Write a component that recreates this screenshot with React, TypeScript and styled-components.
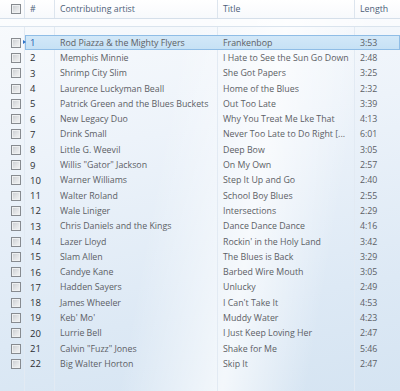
import styled, { createGlobalStyle } from "styled-components";

type Track = { artist: string; title: string; length: string };

const tracks: Track[] = [
  { artist: "Rod Piazza & the Mighty Flyers", title: "Frankenbop", length: "3:53" },
  { artist: "Memphis Minnie", title: "I Hate to See the Sun Go Down", length: "2:48" },
  { artist: "Shrimp City Slim", title: "She Got Papers", length: "3:25" },
  { artist: "Laurence Luckyman Beall", title: "Home of the Blues", length: "2:32" },
  { artist: "Patrick Green and the Blues Buckets", title: "Out Too Late", length: "3:39" },
  { artist: "New Legacy Duo", title: "Why You Treat Me Lke That", length: "4:13" },
  { artist: "Drink Small", title: "Never Too Late to Do Right [...", length: "6:01" },
  { artist: "Little G. Weevil", title: "Deep Bow", length: "3:05" },
  { artist: 'Willis "Gator" Jackson', title: "On My Own", length: "2:57" },
  { artist: "Warner Williams", title: "Step It Up and Go", length: "2:40" },
  { artist: "Walter Roland", title: "School Boy Blues", length: "2:55" },
  { artist: "Wale Liniger", title: "Intersections", length: "2:29" },
  { artist: "Chris Daniels and the Kings", title: "Dance Dance Dance", length: "4:16" },
  { artist: "Lazer Lloyd", title: "Rockin' in the Holy Land", length: "3:42" },
  { artist: "Slam Allen", title: "The Blues is Back", length: "3:29" },
  { artist: "Candye Kane", title: "Barbed Wire Mouth", length: "3:05" },
  { artist: "Hadden Sayers", title: "Unlucky", length: "2:49" },
  { artist: "James Wheeler", title: "I Can't Take It", length: "4:53" },
  { artist: "Keb' Mo'", title: "Muddy Water", length: "4:23" },
  { artist: "Lurrie Bell", title: "I Just Keep Loving Her", length: "2:47" },
  { artist: 'Calvin "Fuzz" Jones', title: "Shake for Me", length: "5:46" },
  { artist: "Big Walter Horton", title: "Skip It", length: "2:47" },
];

const GlobalStyle = createGlobalStyle`
  html, body {
    margin: 0;
    padding: 0;
    overflow: hidden;
  }
  body {
    font-family: "Open Sans", "Noto Sans", sans-serif;
  }
`;

const COLS = "25px 30px 163px 137px 45px";

const Window = styled.div`
  width: 400px;
  height: 391px;
  overflow: hidden;
  display: flex;
  flex-direction: column;
  background:
    linear-gradient(100deg, rgba(255, 255, 255, 0) 40%, rgba(255, 255, 255, 0.7) 62%, rgba(255, 255, 255, 0) 80%),
    linear-gradient(170deg, #f9fbfd 0%, #edf3fa 35%, #dde9f5 75%, #d5e4f2 100%);
`;

const HeaderRow = styled.div`
  display: grid;
  grid-template-columns: ${COLS};
  height: 18px;
  border-bottom: 1px solid #d5dfea;
  background: linear-gradient(#ffffff, #f7f9fc);
`;

const HeaderCell = styled.div<{ $last?: boolean }>`
  display: flex;
  align-items: center;
  padding-left: 5px;
  font-size: 8.8px;
  color: #4d6078;
  border-right: ${(p) => (p.$last ? "none" : "1px solid #dde5ee")};
  white-space: nowrap;
`;

const CheckCell = styled.div<{ $header?: boolean }>`
  display: flex;
  align-items: center;
  padding-left: 11px;
  border-right: ${(p) => (p.$header ? "1px solid #dde5ee" : "none")};
`;

const Box = styled.span`
  box-sizing: border-box;
  width: 10px;
  height: 10px;
  border: 1px solid #878b90;
  background: linear-gradient(135deg, #c8cbcf 0%, #e2e4e6 55%, #f4f4f4 100%);
  box-shadow: inset 0 0 0 1px #eef0f1;
`;

const Band = styled.div`
  height: 7px;
  border-bottom: 1px solid #dae4ee;
  background: rgba(255, 255, 255, 0.55);
`;

const Body = styled.div`
  flex: 1;
  padding-top: 8px;
  background-image:
    linear-gradient(#e2eaf3, #e2eaf3),
    linear-gradient(#e2eaf3, #e2eaf3),
    linear-gradient(#e2eaf3, #e2eaf3),
    linear-gradient(#e2eaf3, #e2eaf3);
  background-size: 1px 100%;
  background-repeat: no-repeat;
  background-position: 24px 0, 54px 0, 217px 0, 354px 0;
`;

const Row = styled.div`
  display: grid;
  grid-template-columns: ${COLS};
  height: 15.3px;
  position: relative;
`;

const Selection = styled.div`
  position: absolute;
  left: 25px;
  right: 0;
  top: 0;
  bottom: 0;
  box-sizing: border-box;
  border: 1px solid #8fbde6;
  background: linear-gradient(#d2e8f8, #c6e1f5);
`;

const FocusArrow = styled.span`
  position: absolute;
  left: 23px;
  top: 5px;
  width: 0;
  height: 0;
  border-top: 2.5px solid transparent;
  border-bottom: 2.5px solid transparent;
  border-left: 3px solid #2f73c8;
`;

const Cell = styled.div`
  position: relative;
  display: flex;
  align-items: center;
  padding-left: 5px;
  font-size: 8.8px;
  color: #5c6065;
  white-space: nowrap;
  overflow: hidden;
`;

const NumCell = styled(Cell)<{ $selected?: boolean }>`
  font-size: 9.5px;
  color: ${(p) => (p.$selected ? "#1f5fb0" : "#2c2f33")};
`;

export default function App() {
  return (
    <Window>
      <GlobalStyle />
      <HeaderRow>
        <CheckCell $header>
          <Box />
        </CheckCell>
        <HeaderCell>#</HeaderCell>
        <HeaderCell>Contributing artist</HeaderCell>
        <HeaderCell>Title</HeaderCell>
        <HeaderCell $last>Length</HeaderCell>
      </HeaderRow>
      <Band />
      <Body>
        {tracks.map((t, i) => (
          <Row key={i}>
            {i === 0 && <Selection />}
            {i === 0 && <FocusArrow />}
            <CheckCell>
              <Box />
            </CheckCell>
            <NumCell $selected={i === 0}>{i + 1}</NumCell>
            <Cell>{t.artist}</Cell>
            <Cell>{t.title}</Cell>
            <Cell>{t.length}</Cell>
          </Row>
        ))}
      </Body>
    </Window>
  );
}
